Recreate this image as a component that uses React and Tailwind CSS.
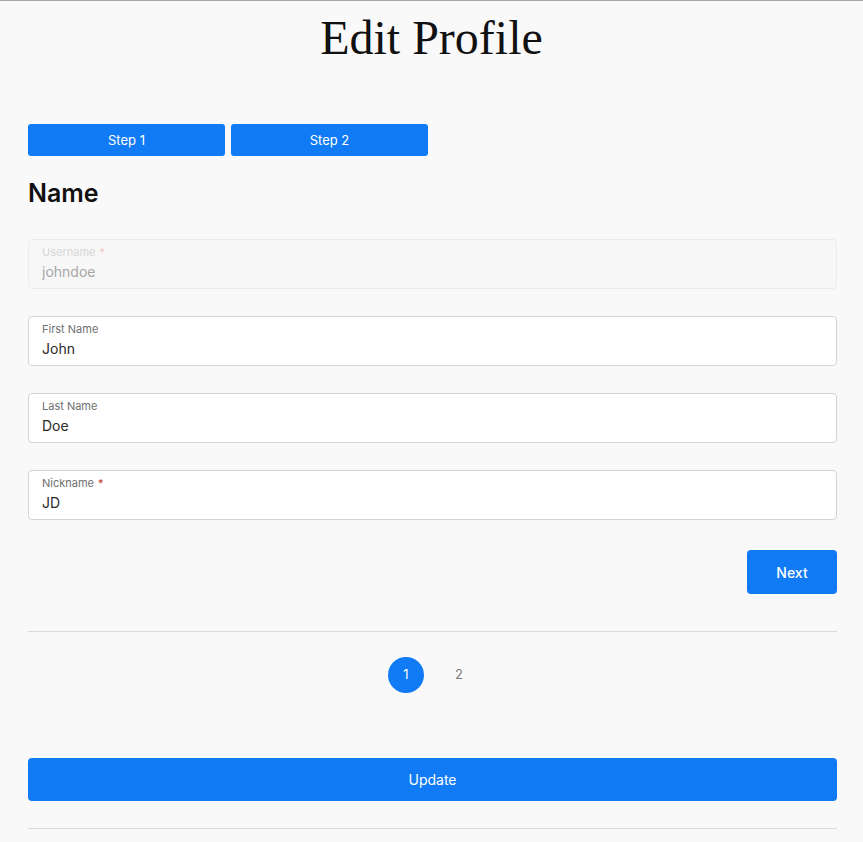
import { useState } from "react";

const fields = [
  { name: "username", label: "Username", value: "johndoe", required: true, disabled: true },
  { name: "firstName", label: "First Name", value: "John" },
  { name: "lastName", label: "Last Name", value: "Doe" },
  { name: "nickname", label: "Nickname", value: "JD", required: true },
];

function Field({ label, value, required, disabled, onChange }) {
  return (
    <label
      className={
        "flex h-[50px] flex-col rounded-[4px] border px-[13px] pt-[5px] " +
        (disabled ? "border-[#ececec] bg-[#f7f7f7]" : "border-[#d4d4d4] bg-white")
      }
    >
      <span className={"text-[11px] leading-[14px] " + (disabled ? "text-[#d6d6d6]" : "text-[#6f6f6f]")}>
        {label}
        {required && <span className={"ml-[4px] " + (disabled ? "text-[#f3c6c6]" : "text-[#c0392b]")}>*</span>}
      </span>
      <input
        className={
          "mt-[4px] bg-transparent text-[14px] leading-[18px] outline-none " +
          (disabled ? "text-[#a6a6a6]" : "text-[#2a2a2a]")
        }
        value={value}
        disabled={disabled}
        onChange={onChange}
      />
    </label>
  );
}

export default function App() {
  const [form, setForm] = useState(Object.fromEntries(fields.map((f) => [f.name, f.value])));
  const [page, setPage] = useState(1);

  return (
    <div className="min-h-[842px] border-t border-[#a9a9a9] bg-[#f9f9fa] font-['Inter',sans-serif]">
      <h1 className="pt-[13px] text-center font-['Liberation_Serif',serif] text-[48px] leading-[48px] text-[#111]">
        Edit Profile
      </h1>

      <div className="mx-[28px] mt-[62px] mr-[26px]">
        <div className="flex gap-[6px]">
          <button className="h-[32px] w-[197px] rounded-[3px] bg-[#117af5] pt-[1px] text-[13px] text-white">Step 1</button>
          <button className="h-[32px] w-[197px] rounded-[3px] bg-[#117af5] pt-[1px] text-[13px] text-white">Step 2</button>
        </div>

        <h2 className="mt-[22px] text-[25px] font-semibold leading-[30px] text-[#111]">Name</h2>

        <div className="mt-[31px] flex flex-col gap-[27px]">
          {fields.map((f) => (
            <Field
              key={f.name}
              {...f}
              value={form[f.name]}
              onChange={(e) => setForm({ ...form, [f.name]: e.target.value })}
            />
          ))}
        </div>

        <div className="mt-[30px] flex justify-end">
          <button className="h-[44px] w-[90px] rounded-[4px] bg-[#117af5] text-[14px] font-medium text-white">
            Next
          </button>
        </div>

        <hr className="mt-[37px] border-[#d9d9d9]" />

        <div className="mt-[25px] flex justify-center gap-[17px]">
          {[1, 2].map((n) => (
            <button
              key={n}
              onClick={() => setPage(n)}
              className={
                "h-[36px] w-[36px] rounded-full text-[13px] " +
                (page === n ? "bg-[#117af5] text-white" : "text-[#777]")
              }
            >
              {n}
            </button>
          ))}
        </div>

        <button className="mt-[65px] h-[43px] w-full rounded-[4px] bg-[#117af5] text-[14px] text-white">
          Update
        </button>

        <hr className="mt-[27px] border-[#d9d9d9]" />
      </div>
    </div>
  );
}
